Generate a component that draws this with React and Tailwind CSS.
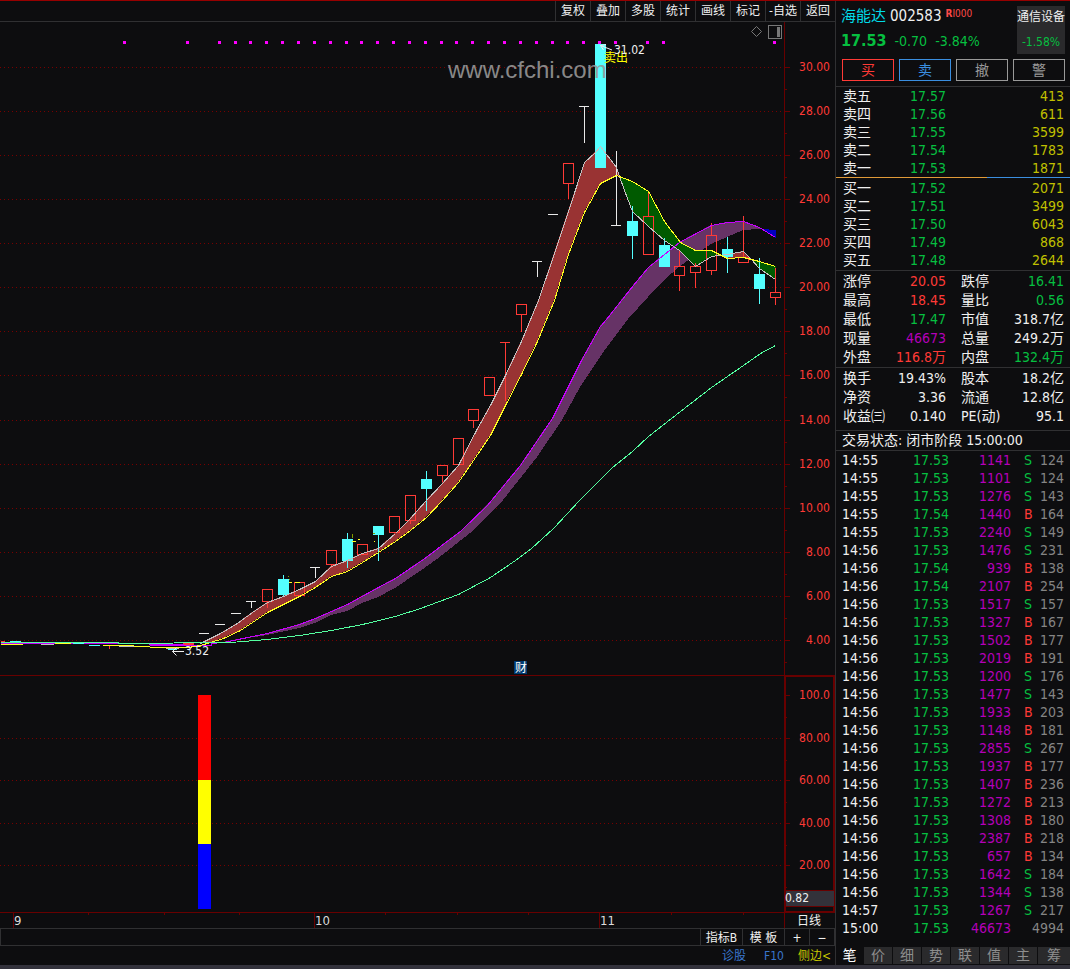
import React, { useState } from 'react';

const toolbar = ['复权', '叠加', '多股', '统计', '画线', '标记', '-自选', '返回'];

const asks = [
  ['卖五', '17.57', 413],
  ['卖四', '17.56', 611],
  ['卖三', '17.55', 3599],
  ['卖二', '17.54', 1783],
  ['卖一', '17.53', 1871],
];

const bids = [
  ['买一', '17.52', 2071],
  ['买二', '17.51', 3499],
  ['买三', '17.50', 6043],
  ['买四', '17.49', 868],
  ['买五', '17.48', 2644],
];

const RED = 'text-[#ff3a36]';
const GREEN = 'text-[#06bf40]';
const PURPLE = 'text-[#b400b8]';
const WHITE = 'text-[#f0f0f0]';

const dayStats = [
  ['涨停', '20.05', RED, '跌停', '16.41', GREEN],
  ['最高', '18.45', RED, '量比', '0.56', GREEN],
  ['最低', '17.47', GREEN, '市值', '318.7亿', WHITE],
  ['现量', '46673', PURPLE, '总量', '249.2万', WHITE],
  ['外盘', '116.8万', RED, '内盘', '132.4万', GREEN],
];

const baseStats = [
  ['换手', '19.43%', WHITE, '股本', '18.2亿', WHITE],
  ['净资', '3.36', WHITE, '流通', '12.8亿', WHITE],
  ['收益㈢', '0.140', WHITE, 'PE(动)', '95.1', WHITE],
];

// time, price, volume, side, count
const ticks = [
  ['14:55', '17.53', 1141, 'S', 124],
  ['14:55', '17.53', 1101, 'S', 124],
  ['14:55', '17.53', 1276, 'S', 143],
  ['14:55', '17.54', 1440, 'B', 164],
  ['14:55', '17.53', 2240, 'S', 149],
  ['14:56', '17.53', 1476, 'S', 231],
  ['14:56', '17.54', 939, 'B', 138],
  ['14:56', '17.54', 2107, 'B', 254],
  ['14:56', '17.53', 1517, 'S', 157],
  ['14:56', '17.53', 1327, 'B', 167],
  ['14:56', '17.53', 1502, 'B', 177],
  ['14:56', '17.53', 2019, 'B', 191],
  ['14:56', '17.53', 1200, 'S', 176],
  ['14:56', '17.53', 1477, 'S', 143],
  ['14:56', '17.53', 1933, 'B', 203],
  ['14:56', '17.53', 1148, 'B', 181],
  ['14:56', '17.53', 2855, 'S', 267],
  ['14:56', '17.53', 1937, 'B', 177],
  ['14:56', '17.53', 1407, 'B', 236],
  ['14:56', '17.53', 1272, 'B', 213],
  ['14:56', '17.53', 1308, 'B', 180],
  ['14:56', '17.53', 2387, 'B', 218],
  ['14:56', '17.53', 657, 'B', 134],
  ['14:56', '17.53', 1642, 'S', 184],
  ['14:56', '17.53', 1344, 'S', 138],
  ['14:57', '17.53', 1267, 'S', 217],
  ['15:00', '17.53', 46673, '', 4994],
];

const tabs = ['笔', '价', '细', '势', '联', '值', '主', '筹'];

// x, wick top, body top, body bottom, wick bottom
const hollow = [
  [267, 589, 589, 602, 607],
  [299, 582, 582, 596, 596],
  [331, 550, 550, 565, 567],
  [362, 544, 544, 555, 555],
  [394, 516, 516, 533, 533],
  [410, 495, 495, 521, 523],
  [442, 465, 465, 476, 481],
  [458, 438, 438, 465, 465],
  [473, 409, 409, 421, 427],
  [489, 377, 377, 396, 396],
  [521, 304, 304, 315, 331],
  [568, 163, 163, 184, 198],
  [648, 190, 216, 255, 255],
  [679, 250, 266, 276, 290],
  [695, 262, 266, 273, 287],
  [711, 222, 235, 271, 274],
  [743, 215, 257, 263, 263],
  [775, 267, 292, 298, 304],
];

const solid = [
  [283, 575, 579, 595, 597],
  [347, 533, 539, 561, 568],
  [378, 526, 526, 535, 561],
  [426, 471, 479, 489, 511],
  [600, 44, 44, 168, 168],
  [632, 206, 221, 236, 259],
  [664, 238, 245, 267, 267],
  [727, 237, 249, 257, 273],
  [759, 258, 274, 289, 304],
];

// x, bar y, wick top, wick bottom, colour
const flat = [
  [204, 633, 633, 634, '#e8e8e8'],
  [220, 624, 624, 625, '#e8e8e8'],
  [236, 613, 613, 614, '#e8e8e8'],
  [251, 601, 601, 608, '#e8e8e8'],
  [315, 567, 567, 578, '#e8e8e8'],
  [505, 342, 342, 401, '#ff3a36'],
  [537, 261, 261, 277, '#e8e8e8'],
  [553, 214, 214, 215, '#e8e8e8'],
  [584, 106, 106, 143, '#e8e8e8'],
  [616, 225, 151, 226, '#e8e8e8'],
];

const dots = [
  123, 186, 218, 234, 249, 265, 281, 297, 313, 329, 345, 360, 376, 392, 408, 424, 440, 455, 471,
  487, 503, 519, 535, 551, 566, 582, 598, 614, 646, 662, 773,
];

const fastLine =
  '200,643 220,633 237,623 252,612 267,602 283,596 299,589 315,581 331,566 347,560 362,553 378,548 395,533 410,518 426,500 442,483 458,465 476,430 490,405 505,375 521,341 538,300 552,259 568,211 584,162 595,152 600,146 616,167 619,176 624,190 632,211 648,226 664,240 679,250 695,266 711,256 727,254 743,251 751,259 759,268 775,279';
const slowLine =
  '210,642 223,638 240,630 252,622 267,612 283,604 299,596 315,587 331,576 347,571 362,562 378,552 395,541 410,530 426,517 442,500 458,482 473,460 490,435 505,405 521,374 537,341 554,300 568,254 584,212 600,183 616,175 632,181 648,191 664,221 680,242 695,250 711,250 727,258 743,257 759,261 775,266';
const purpleTop =
  '223,642 267,633 299,624 315,618 347,604 378,587 395,578 423,559 460,531 487,505 520,465 552,418 580,362 600,326 606,319 633,285 648,267 664,254 679,242 711,225 727,222 743,221 759,227 775,237';

const prices = [
  [67, '30.00'],
  [111, '28.00'],
  [155, '26.00'],
  [199, '24.00'],
  [243, '22.00'],
  [287, '20.00'],
  [331, '18.00'],
  [375, '16.00'],
  [420, '14.00'],
  [464, '12.00'],
  [508, '10.00'],
  [552, '8.00'],
  [596, '6.00'],
  [640, '4.00'],
];

const levels = [
  [695, '100.0'],
  [738, '80.00'],
  [780, '60.00'],
  [823, '40.00'],
  [865, '20.00'],
];

const Scale = ({ rows, step }) => (
  <>
    {rows.map(([y, label]) => (
      <g key={label}>
        {label !== '100.0' && (
          <path d={`M0 ${y + 0.5}H784`} stroke="#780000" strokeDasharray="1 3" />
        )}
        <path d={`M785 ${y + 0.5}h5M785 ${y + step + 0.5}h2`} stroke="#680000" />
        <text x="830" y={y + 4} textAnchor="end" fill="#ff3a36" fontSize="12">
          {label}
        </text>
      </g>
    ))}
  </>
);

const PriceChart = () => (
  <svg viewBox="0 22 835 653" className="block w-full" role="img" aria-label="日K线">
    <g shapeRendering="crispEdges" fill="none">
      <Scale rows={prices} step={22} />
      <path d="M784.5 22V675" stroke="#680000" />
    </g>

    <g fill="none" stroke="#777" shapeRendering="crispEdges">
      <path d="M756.5 26.500l5 5-5 5-5-5z" shapeRendering="auto" />
      <rect x="768.5" y="25.500" width="13" height="13" />
      <rect x="777" y="27" width="3" height="10" fill="#777" stroke="none" />
    </g>

    {dots.map((x) => (
      <rect key={x} x={x} y="41" width="3" height="3" fill="#ff00ff" />
    ))}

    <g shapeRendering="crispEdges">
      {/* moving average ribbons */}
      <polygon
        fill="#663366"
        points={`${purpleTop.replace(' 775,237', '')} 762,229 759,229 743,230 727,237 711,244 695,255 679,267 664,280 648,297 628,319 604,351 580,387 562,420 537,457 503,500 470,533 437,559 420,571 395,588 378,597 362,603 347,611 331,615 315,623 299,628 267,635`}
      />
      <polygon fill="#0000c0" points="762,229 776,230 776,238" />
      <polygon
        fill="#993333"
        points="200,643 220,633 237,623 252,612 267,602 283,596 299,589 315,581 331,566 347,560 362,553 378,548 395,533 410,518 426,500 442,483 458,465 476,430 490,405 505,375 521,341 538,300 552,259 568,211 584,162 595,152 600,146 616,167 619,176 616,175 600,183 584,212 568,254 554,300 537,341 521,374 505,405 490,435 473,460 458,482 442,500 426,517 410,530 395,541 378,552 362,562 347,571 331,576 315,587 299,596 283,604 267,612 252,622 240,630 223,638 210,642"
      />
      <polygon
        fill="#005a00"
        points="619,176 632,181 648,191 664,221 680,242 695,250 711,250 721,255 711,256 695,266 679,250 664,240 648,226 632,211 624,190"
      />
      <polygon fill="#993333" points="721,255 727,254 743,251 751,259 743,257 727,258" />
      <polygon fill="#005a00" points="751,259 759,261 776,266 776,280 759,268" />
    </g>

    <g shapeRendering="crispEdges" transform="translate(.5 .5)">
      {hollow.map(([x, top, open, close, low]) => (
        <g key={x} stroke="#ff3a36" fill="none">
          <rect x={x - 5} y={open} width="10" height={close - open - 1} />
          {open > top && <path d={`M${x} ${top}V${open}`} />}
          {low > close && <path d={`M${x} ${close - 1}V${low}`} />}
        </g>
      ))}
    </g>
    <g shapeRendering="crispEdges">
      {solid.map(([x, top, open, close, low]) => (
        <g key={x} fill="#54ffff">
          <rect x={x - 5} y={open} width="11" height={close - open} />
          <rect x={x} y={top} width="1" height={low - top} />
        </g>
      ))}
      {flat.map(([x, bar, top, low, fill]) => (
        <g key={x} fill={fill}>
          <rect x={x - 5} y={bar} width="10" height="1" />
          <rect x={x} y={top} width="1" height={low - top} />
        </g>
      ))}
      <rect x="183" y="642" width="11" height="3" fill="#ff3a36" />
    </g>

    <g shapeRendering="crispEdges" fill="none" transform="translate(.5 .5)">
      <polyline points={fastLine} stroke="#c4c0c0" />
      <polyline points={purpleTop} stroke="#c800ff" />
      <polyline points={slowLine} stroke="#ffff20" />
      {/* flat stretch before the limit-up run */}
      <path d="M0 643H149V644H183V645H211V643L223 642M149 645H183" stroke="#c800ff" />
      <path d="M0 644H22M54 643H70M102 645H133M133 646H149M149 647H188L200 645L210 642" stroke="#ffff20" />
      <path d="M40 644H53M118 646H133M165 648H178" stroke="#c4c0c0" />
      <path d="M9 641H20M14 640V641M88 645H99M72 643H83M167 649H176" stroke="#54ffff" />
      <path d="M0 641H4M109 645V648" stroke="#ff3a36" />
      <polyline
        points="0,642 118,642 118,643 230,642 267,639 299,635 331,630 362,624 395,616 420,608 458,594 490,577 515,560 531,548 553,528 566,514 580,499 612,467 632,451 648,436 680,411 711,387 743,365 760,353 775,345"
        stroke="#54ffa0"
      />
      <path d="M288 582h3M294 582h5M351 541h4M357 539h2M373 541h1" stroke="#ffff20" />
      <path d="M288 579h1M352 533v4M372 533h2M287 576h1" stroke="#7f9a00" />
    </g>

    <g stroke="#f0f0f0" fill="none">
      <path d="M184 651.500H172.500M176.500 647.500L172.500 651.500L176.500 655.500" />
      <path d="M612 50L600.500 45.500M606 44.500L600.500 45.500L603.500 50" />
    </g>
    <g fontSize="12">
      <text x="185" y="655" fill="#f0f0f0">3.52</text>
      <text x="604" y="62" fill="#ffff00">卖出</text>
      <text x="614" y="54" fill="#f0f0f0">31.02</text>
      <rect x="514" y="661" width="13" height="13" fill="#003a70" />
      <text x="515" y="672" fill="#fff">财</text>
    </g>
    <text x="448" y="78" fontSize="24" fill="#969696" opacity=".9" fontFamily="Liberation Sans, Arial, sans-serif">
      www.cfchi.com
    </text>
  </svg>
);

const IndicatorChart = () => (
  <svg viewBox="0 675 835 253" className="block w-full" role="img" aria-label="指标">
    <g shapeRendering="crispEdges" fill="none">
      <Scale rows={levels} step={22} />
      <g transform="translate(.5 .5)">
        <path d="M-1 675H784M-1 912H784M784 912V928M13 912V928M314 912V928M599 912V928" stroke="#680000" />
        <path d="M88 912v2M164 912v2M239 912v2M385 912v2M457 912v2M528 912v2M671 912v2M743 912v2" stroke="#680000" />
      </g>
      <path d="M785 676H834V912H785Z" stroke="#680000" strokeWidth="2" />
      <rect x="786" y="891" width="48" height="15" fill="#33323a" />
      <path d="M786 890.500H833M786 906.500H833" stroke="#680000" />
      <rect x="198" y="695" width="13" height="85" fill="#ff0000" />
      <rect x="198" y="780" width="13" height="64" fill="#ffff00" />
      <rect x="198" y="844" width="13" height="65" fill="#0000ff" />
    </g>
    <g fontSize="12" fill="#f0f0f0">
      <text x="785" y="902">0.82</text>
      <text x="797" y="925">日线</text>
    </g>
    <g fontSize="13" fill="#dcdcdc">
      <text x="14" y="925">9</text>
      <text x="315" y="925">10</text>
      <text x="600" y="925">11</text>
    </g>
  </svg>
);

const OrderTable = ({ rows, label }) => (
  <table className="w-full table-fixed" aria-label={label}>
    <tbody>
      {rows.map(([name, price, volume]) => (
        <tr key={name} className="h-[18px]">
          <th scope="row" className="w-[43px] p-0 text-left font-normal">{name}</th>
          <td className={`w-[60px] p-0 text-right ${GREEN}`}>{price}</td>
          <td className="p-0 text-right text-[#c0c000]">{volume}</td>
        </tr>
      ))}
    </tbody>
  </table>
);

const StatTable = ({ rows, label }) => (
  <table className="w-full table-fixed" aria-label={label}>
    <tbody>
      {rows.map(([a, av, ac, b, bv, bc]) => (
        <tr key={a} className="h-[19px] whitespace-nowrap">
          <th scope="row" className="w-[43px] p-0 text-left font-normal">{a}</th>
          <td className={`w-[60px] p-0 text-right ${ac}`}>{av}</td>
          <th scope="row" className="w-[60px] p-0 pl-[15px] text-left font-normal">{b}</th>
          <td className={`p-0 text-right ${bc}`}>{bv}</td>
        </tr>
      ))}
    </tbody>
  </table>
);

const QuotePanel = () => {
  const [tab, setTab] = useState('笔');

  return (
    <aside className="flex w-[235px] shrink-0 flex-col border-l border-[#303032] text-[14px] leading-[18px]">
      <header className="border-b border-[#303032] py-[5px] pr-[5px] pl-[5px]">
        <div className="flex justify-between">
          <div>
            <h1 className="flex items-start gap-1 whitespace-nowrap text-[15px] leading-5">
              <span className="text-[#00dce8]">海能达</span>
              <span>002583</span>
              <span className="text-[10px] leading-4 text-[#ff4a48]">
                <b>R</b>I000
              </span>
            </h1>
            <p className={`mt-[5px] flex items-center gap-2 leading-5 ${GREEN}`}>
              <b className="text-[16px]">17.53</b>
              <span>-0.70</span>
              <span>-3.84%</span>
            </p>
          </div>
          <a href="#sector" className="flex h-12 w-12 flex-col items-center justify-between bg-[#2a2a2c] pt-0.5 pb-1 text-[12px] whitespace-nowrap">
            <span>通信设备</span>
            <span className={`leading-4 ${GREEN}`}>-1.58%</span>
          </a>
        </div>
        <div className="mt-[5px] grid grid-cols-4 gap-[5px] pl-px">
          <button className="h-[22px] border border-[#ff3a36] leading-5 text-[#ff3a36]">买</button>
          <button className="h-[22px] border border-[#3a8ee0] leading-5 text-[#3a8ee0]">卖</button>
          <button className="h-[22px] border border-[#999] leading-5 text-[#999]">撤</button>
          <button className="h-[22px] border border-[#999] leading-5 text-[#999]">警</button>
        </div>
      </header>

      <section className="pr-1.5 pl-[7px]">
        <OrderTable rows={asks} label="卖盘" />
      </section>
      <div className="flex h-px">
        <div className="w-[151px] bg-[#e09a38]" />
        <div className="flex-1 bg-[#3a8ee0]" />
      </div>
      <section className="border-b border-[#303032] pt-px pr-1.5 pb-px pl-[7px]">
        <OrderTable rows={bids} label="买盘" />
      </section>
      <section className="border-b border-[#303032] pr-1.5 pb-px pl-[7px]">
        <StatTable rows={dayStats} label="行情" />
      </section>
      <section className="border-b border-[#303032] pr-1.5 pb-[5px] pl-[7px]">
        <StatTable rows={baseStats} label="股本" />
      </section>
      <p className="border-b border-[#303032] pl-1.5 leading-[19px]">交易状态: 闭市阶段 15:00:00</p>

      <section className="pr-1.5 pl-1.5">
        <table className="w-full table-fixed" aria-label="分笔成交">
          <tbody>
            {ticks.map(([time, price, volume, side, count], i) => (
              <tr key={i} className="h-[18px]">
                <td className="w-[47px] p-0">{time}</td>
                <td className={`w-[60px] p-0 text-right ${GREEN}`}>{price}</td>
                <td className={`w-[62px] p-0 text-right ${PURPLE}`}>{volume}</td>
                <td className={`w-[21px] p-0 pl-[13px] ${side === 'B' ? RED : GREEN}`}>{side}</td>
                <td className="p-0 text-right text-[#858585]">{count}</td>
              </tr>
            ))}
          </tbody>
        </table>
      </section>

      <nav className="mt-auto mb-px flex gap-px">
        {tabs.map((name) => (
          <button
            key={name}
            onClick={() => setTab(name)}
            className={`h-[17px] w-7 leading-[17px] first:w-[27px] last:flex-1 ${
              tab === name ? 'bg-transparent text-white' : 'bg-[#2a2a2c] text-[#8e8e8e]'
            }`}
          >
            {name}
          </button>
        ))}
      </nav>
    </aside>
  );
};

const App = () => (
  <div className="min-h-screen border-t border-[#960000] bg-[#0d0d0f] font-['DejaVu_Sans_Condensed','Noto_Sans_CJK_SC',sans-serif] text-[#f0f0f0]">
    <div className="flex">
      <main className="min-w-0 flex-1">
        <nav className="flex h-[21px] justify-end border-b border-[#303032] text-[12px]">
          {toolbar.map((name) => (
            <button key={name} className="w-[35px] border-l border-[#303032] whitespace-nowrap">
              {name}
            </button>
          ))}
        </nav>

        <PriceChart />
        <IndicatorChart />

        <div className="flex h-[18px] justify-end border border-[#303032] text-[12px] leading-[18px]">
          <button className="w-[42px] border-l border-[#303032] whitespace-nowrap">指标B</button>
          <button className="w-[42px] border-l border-[#303032]">模 板</button>
          <button className="w-[25px] border-l border-[#303032]" aria-label="放大">+</button>
          <button className="w-[25px] border-l border-[#303032]" aria-label="缩小">−</button>
        </div>
        <div className="flex h-[19px] justify-end gap-[18px] pr-1 text-[12px] leading-5 text-[#3a76cc]">
          <a href="#diagnose">诊股</a>
          <a href="#f10">F10</a>
          <button className="-ml-1 text-[#c8c800]">侧边&lt;</button>
        </div>
      </main>
      <QuotePanel />
    </div>
    <footer className="h-1 bg-[#33323c]" />
  </div>
);

export default App;
